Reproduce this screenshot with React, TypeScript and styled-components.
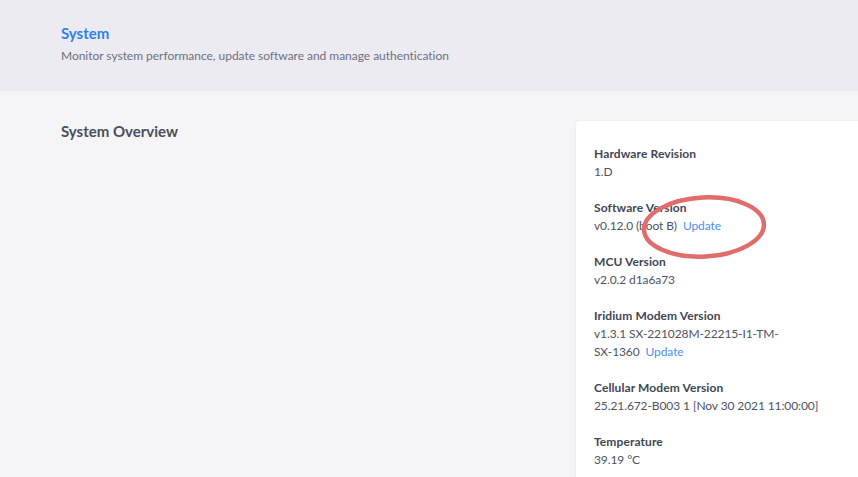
import React from 'react';
import styled, { createGlobalStyle } from 'styled-components';

const GlobalStyle = createGlobalStyle`
  html, body {
    margin: 0;
    padding: 0;
    background: #f5f5f8;
    font-family: Lato, "Open Sans", sans-serif;
    overflow: hidden;
  }
`;

const Page = styled.div`
  width: 858px;
  height: 477px;
  overflow: hidden;
  background: #f5f5f8;
`;

const Header = styled.header`
  height: 91px;
  box-sizing: border-box;
  padding: 23px 61px 0;
  background: #ecebf1;
`;

const Title = styled.h1`
  margin: 0;
  font-size: 15px;
  line-height: 20px;
  font-weight: 700;
  color: #2f80ed;
`;

const Subtitle = styled.p`
  margin: 4px 0 0;
  font-size: 12px;
  line-height: 18px;
  letter-spacing: -0.03px;
  color: #6c7080;
`;

const Main = styled.main`
  display: grid;
  grid-template-columns: 499px 300px;
  column-gap: 16px;
  align-items: start;
  padding: 30px 0 0 61px;
`;

const SectionTitle = styled.h2`
  margin: 0;
  font-size: 15px;
  line-height: 20px;
  font-weight: 700;
  color: #4a4e5a;
`;

const Card = styled.section`
  position: relative;
  box-sizing: border-box;
  padding: 24px 18px;
  background: #ffffff;
  border-radius: 4px;
  box-shadow: 0 0 3px rgba(40, 40, 60, 0.08);
`;

const InfoList = styled.dl`
  margin: 0;
  width: 230px;
`;

const InfoItem = styled.div`
  margin-bottom: 18px;
`;

const Label = styled.dt`
  font-size: 12px;
  line-height: 18px;
  font-weight: 700;
  letter-spacing: 0.1px;
  color: #404653;
`;

const Value = styled.dd`
  margin: 0;
  font-size: 12px;
  line-height: 18px;
  letter-spacing: -0.1px;
  color: #4d5362;
`;

const Nowrap = styled.span`
  white-space: nowrap;
`;

const UpdateLink = styled.a`
  margin-left: 6px;
  color: #4c8ff0;
  text-decoration: none;
  cursor: pointer;
`;

const Annotation = styled.svg`
  position: absolute;
  left: 64px;
  top: 72px;
  overflow: visible;
  pointer-events: none;
`;

type Info = { label: string; value: string; tail?: string; update?: boolean };

const items: Info[] = [
  { label: 'Hardware Revision', value: '1.D' },
  { label: 'Software Version', value: 'v0.12.0 (boot B)', update: true },
  { label: 'MCU Version', value: 'v2.0.2 d1a6a73' },
  { label: 'Iridium Modem Version', value: 'v1.3.1 SX-221028M-22215-I1-TM-', tail: 'SX-1360', update: true },
  { label: 'Cellular Modem Version', value: '25.21.672-B003 1 [Nov 30 2021 11:00:00]' },
  { label: 'Temperature', value: '39.19 °C' },
];

export default function App() {
  return (
    <Page>
      <GlobalStyle />
      <Header>
        <Title>System</Title>
        <Subtitle>Monitor system performance, update software and manage authentication</Subtitle>
      </Header>
      <Main>
        <SectionTitle>System Overview</SectionTitle>
        <Card>
          <InfoList>
            {items.map((item) => (
              <InfoItem key={item.label}>
                <Label>{item.label}</Label>
                <Value>
                  {item.value}
                  {item.tail && <Nowrap>{item.tail}</Nowrap>}
                  {item.update && <UpdateLink>Update</UpdateLink>}
                </Value>
              </InfoItem>
            ))}
          </InfoList>
          <Annotation width="128" height="68">
            <ellipse
              cx="64"
              cy="34"
              rx="60"
              ry="29.5"
              transform="rotate(-3 64 34)"
              fill="none"
              stroke="#e06c6c"
              strokeWidth="4.5"
            />
          </Annotation>
        </Card>
      </Main>
    </Page>
  );
}
